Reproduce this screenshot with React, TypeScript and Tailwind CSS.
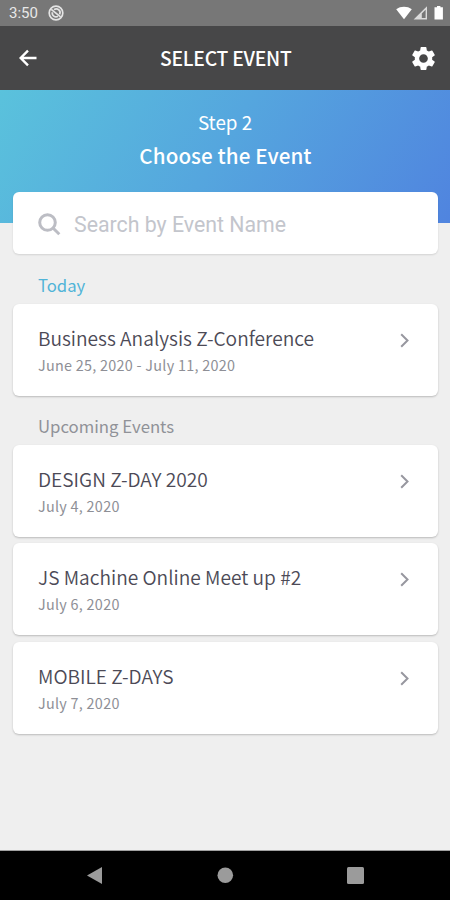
const sans = "font-['Noto_Sans_CJK_SC','Noto_Sans',sans-serif]";

function EventCard({ title, date }: { title: string; date: string }) {
  return (
    <button className="flex h-[92px] w-full justify-between rounded-[6px] bg-white pt-[21px] pr-[28px] pl-[25px] text-left shadow-[0_1px_2px_rgba(0,0,0,0.22)]">
      <span className="flex flex-col">
        <span className="h-[26px] text-[19.15px] leading-[26px] font-[350] whitespace-nowrap text-[#4c4a56]">{title}</span>
        <span className="h-[26px] text-[14.4px] leading-[27px] tracking-[0.27px] whitespace-nowrap text-[#8e8f96]">{date}</span>
      </span>
      <svg className="mt-[8px] h-[15px] w-[10px]" viewBox="0 0 10 15" fill="none" stroke="#97979f" strokeWidth="2">
        <path d="M1.2 1.3 7.5 7.5 1.2 13.7" />
      </svg>
    </button>
  );
}

export default function App() {
  return (
    <div className={`flex h-[900px] w-[450px] flex-col overflow-hidden bg-[#efefef] ${sans}`}>
      <div className="flex h-[26px] items-center bg-[#777777] pr-[6px] pl-[9px] text-white">
        <span className="font-[Roboto,sans-serif] text-[15px] text-[#e8e8e8]">3:50</span>
        <svg className="ml-[10px] h-[16px] w-[16px]" viewBox="0 0 16 16" fill="none" stroke="#e4e4e4">
          <circle cx="8" cy="8" r="6.8" strokeWidth="1.7" />
          <path d="M4.4 7.2A3.7 3.7 0 0 0 10 11.2M6 4.7a3.7 3.7 0 0 1 5.6 4.6" strokeWidth="1.7" />
          <path d="M3.2 4.4 12.6 11.8" strokeWidth="1.7" />
        </svg>
        <svg className="ml-auto h-[16px] w-[48px]" viewBox="0 0 48 16" fill="#fff">
          <path d="M.2 4.2C4.5.9 11.5.9 15.8 4.2L8 14.2Z" />
          <path d="M17.6 14.6 31 1.2V14.6Z" fill="#dcdcdc" />
          <path d="M25.8 13V8.6L29.6 4.8V13Z" fill="#777" />
          <path d="M38.5 2.2h2.5V1h3.4v1.2h2.5v12.4h-8.4z" />
        </svg>
      </div>
      <header className="flex h-[64px] items-center justify-between bg-[#474748] pr-[12px] pl-[18px] text-white">
        <svg className="h-[20px] w-[20px]" viewBox="0 0 20 20" fill="none" stroke="#fff" strokeWidth="2.4">
          <path d="M18.5 10H3M10 2.7 2.7 10 10 17.3" />
        </svg>
        <h1 className="ml-[4.5px] text-[19.3px] font-medium tracking-[-0.25px]">SELECT EVENT</h1>
        <svg className="h-[29px] w-[29px]" viewBox="0 0 24 24" fill="#fff">
          <path d="M19.14 12.94c.04-.3.06-.61.06-.94 0-.32-.02-.64-.07-.94l2.03-1.58a.49.49 0 0 0 .12-.61l-1.92-3.32a.488.488 0 0 0-.59-.22l-2.39.96c-.5-.38-1.03-.7-1.62-.94l-.36-2.54a.484.484 0 0 0-.48-.41h-3.84c-.24 0-.43.17-.47.41l-.36 2.54c-.59.24-1.13.57-1.62.94l-2.39-.96c-.22-.08-.47 0-.59.22L2.74 8.87c-.12.21-.08.47.12.61l2.03 1.58c-.05.3-.09.63-.09.94s.02.64.07.94l-2.03 1.58a.49.49 0 0 0-.12.61l1.92 3.32c.12.22.37.29.59.22l2.39-.96c.5.38 1.03.7 1.62.94l.36 2.54c.05.24.24.41.48.41h3.84c.24 0 .44-.17.47-.41l.36-2.54c.59-.24 1.13-.56 1.62-.94l2.39.96c.22.08.47 0 .59-.22l1.92-3.32c.12-.22.07-.47-.12-.61zM12 15.6c-1.98 0-3.6-1.62-3.6-3.6s1.62-3.6 3.6-3.6 3.6 1.62 3.6 3.6-1.62 3.6-3.6 3.6" />
        </svg>
      </header>
      <section className="flex h-[133px] flex-col items-center bg-linear-[122deg,#5ac2dc_0%,#55a6de_48%,#5084df_100%] pt-[16px] text-white">
        <p className="h-[33px] text-[18.8px] leading-[32px]">Step 2</p>
        <h2 className="h-[34px] pl-px text-[20.6px] leading-[32px] font-medium tracking-[0.1px]">Choose the Event</h2>
      </section>
      <main className="-mt-[31px] flex flex-1 flex-col pr-[12px] pl-[13px]">
        <label className="flex h-[62px] items-center rounded-[6px] bg-white pl-[24px] shadow-[0_1px_2px_rgba(0,0,0,0.12)]">
          <svg className="mt-[2px] h-[24px] w-[24px]" viewBox="0 0 24 24" fill="none" stroke="#bcbdc4" strokeWidth="3">
            <circle cx="10.5" cy="10.5" r="7.8" />
            <path d="m16 16 6.3 6.2" />
          </svg>
          <span className="mt-[3px] ml-[13px] font-[Roboto,sans-serif] text-[21.3px] text-[#c3c5cc]">Search by Event Name</span>
        </label>
        <h3 className="mt-[18px] h-[32px] pl-[25px] text-[16.7px] leading-[26px] text-[#50b4d8]">Today</h3>
        <EventCard title="Business Analysis Z-Conference" date="June 25, 2020 - July 11, 2020" />
        <h3 className="mt-[17px] h-[32px] pl-[25px] text-[16.75px] leading-[26px] text-[#909298]">Upcoming Events</h3>
        <div className="flex flex-col gap-[6.4px]">
          <EventCard title="DESIGN Z-DAY 2020" date="July 4, 2020" />
          <EventCard title="JS Machine Online Meet up #2" date="July 6, 2020" />
          <EventCard title="MOBILE Z-DAYS" date="July 7, 2020" />
        </div>
      </main>
      <nav className="flex h-[50px] shrink-0 items-center border-t border-[#a0a0a0] bg-black">
        <svg className="h-[49px] w-[450px]" viewBox="0 851 450 49" fill="#9b9b9b">
          <path d="M87 875.5 102 867V884Z" />
          <circle cx="225.3" cy="875.3" r="7.8" />
          <rect x="347" y="867" width="17" height="17" rx="1.5" />
        </svg>
      </nav>
    </div>
  );
}
